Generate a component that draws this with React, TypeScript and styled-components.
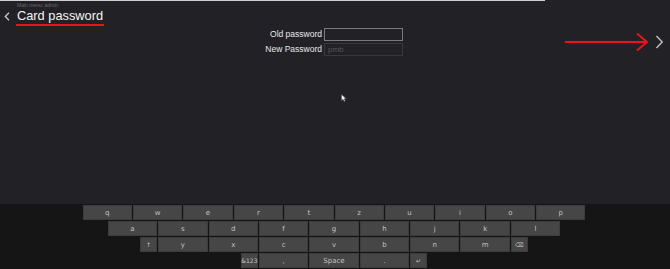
import React from "react";
import styled, { createGlobalStyle } from "styled-components";

const GlobalStyle = createGlobalStyle`
  html, body {
    margin: 0;
    padding: 0;
    background: #222226;
  }
  body {
    font-family: "Liberation Sans", Arial, sans-serif;
  }
`;

type KeyDef = { label: string; small?: boolean };

const rows: KeyDef[][] = [
  "qwertzuiop".split("").map(c => ({ label: c })),
  "asdfghjkl".split("").map(c => ({ label: c })),
  [
    { label: "↑", small: true },
    ..."yxcvbnm".split("").map(c => ({ label: c })),
    { label: "⌫", small: true },
  ],
  [
    { label: "&123", small: true },
    { label: "," },
    { label: "Space" },
    { label: "." },
    { label: "↵", small: true },
  ],
];

const App = () => {
  return (
    <>
      <GlobalStyle />
      <Page>
        <TopLine />
        <Header>
          <Breadcrumb>Main menu: admin</Breadcrumb>
          <TitleRow>
            <BackButton>
              <svg width="6" height="9" viewBox="0 0 6 9">
                <path d="M5 0.8 L1.3 4.5 L5 8.2" fill="none" stroke="#c8c8c8" strokeWidth="1.3" />
              </svg>
            </BackButton>
            <Title>Card password</Title>
          </TitleRow>
        </Header>

        <Body>
          <Form>
            <Label>Old password</Label>
            <Input active />
            <Label>New Password</Label>
            <Input placeholder="pmb" />
          </Form>
        </Body>

        <Annotation>
          <svg width="86" height="20" viewBox="0 0 86 20">
            <path d="M0 10 L82 10" stroke="#e8161b" strokeWidth="2" />
            <path d="M72 1.5 L82 10 L72 18.5" fill="none" stroke="#e8161b" strokeWidth="2" />
          </svg>
        </Annotation>
        <NextButton>
          <svg width="9" height="14" viewBox="0 0 9 14">
            <path d="M1.5 1 L7.2 7 L1.5 13" fill="none" stroke="#bdbdbd" strokeWidth="1.5" />
          </svg>
        </NextButton>

        <Cursor>
          <svg width="6" height="8" viewBox="0 0 6 8">
            <path d="M0.5 0.5 L0.5 6.5 L2 5.2 L3.2 7.5 L4.2 7 L3.1 4.8 L5.2 4.8 Z" fill="#fff" stroke="#555" strokeWidth="0.6" />
          </svg>
        </Cursor>

        <Keyboard>
          {rows.map((row, i) => (
            <KeyRow key={i}>
              {row.map(k => (
                <Key key={k.label} small={k.small}>
                  {k.label}
                </Key>
              ))}
            </KeyRow>
          ))}
        </Keyboard>
      </Page>
    </>
  );
};

export default App;

const Page = styled.div`
  position: relative;
  width: 670px;
  height: 269px;
  display: flex;
  flex-direction: column;
  background: #222226;
  overflow: hidden;
`;

const TopLine = styled.div`
  width: 545px;
  height: 1px;
  background: #cfcfcf;
  flex: none;
`;

const Header = styled.div`
  display: flex;
  flex-direction: column;
  flex: none;
`;

const Breadcrumb = styled.div`
  margin: 1px 0 0 17px;
  font-size: 5px;
  line-height: 6px;
  color: #6a6a6e;
`;

const TitleRow = styled.div`
  display: flex;
  align-items: center;
  height: 17px;
`;

const BackButton = styled.div`
  width: 16px;
  display: flex;
  justify-content: center;
  padding-right: 2px;
  box-sizing: border-box;
`;

const Title = styled.h1`
  margin: 0;
  padding: 0 1px 1px;
  font-size: 12.8px;
  font-weight: 400;
  line-height: 15px;
  color: #f4f4f4;
  border-bottom: 2px solid #e8161b;
`;

const Body = styled.div`
  flex: 1;
  display: flex;
  justify-content: center;
  align-items: flex-start;
  padding-top: 3px;
`;

const Form = styled.div`
  display: grid;
  grid-template-columns: 60px 79px;
  column-gap: 2px;
  row-gap: 2px;
  margin-right: 5px;
`;

const Label = styled.div`
  font-size: 8.5px;
  line-height: 13px;
  color: #e6e6e6;
  text-align: right;
  white-space: nowrap;
`;

const Input = styled.input<{ active?: boolean }>`
  box-sizing: border-box;
  width: 79px;
  height: 13px;
  margin: 0;
  padding: 0 3px;
  background: #222226;
  border: 1px solid ${p => (p.active ? "#7a7a7e" : "#38383c")};
  font-family: "Liberation Sans", Arial, sans-serif;
  font-size: 8px;
  color: #ddd;
  outline: none;

  &::placeholder {
    color: #56565a;
  }
`;

const Annotation = styled.div`
  position: absolute;
  left: 565px;
  top: 32px;
  line-height: 0;
`;

const NextButton = styled.div`
  position: absolute;
  left: 655px;
  top: 35px;
  line-height: 0;
`;

const Cursor = styled.div`
  position: absolute;
  left: 341px;
  top: 94px;
  line-height: 0;
`;

const Keyboard = styled.div`
  flex: none;
  height: 65px;
  box-sizing: border-box;
  padding-top: 1px;
  background: #151515;
  display: flex;
  flex-direction: column;
  gap: 1px;
`;

const KeyRow = styled.div`
  display: flex;
  justify-content: center;
  gap: 1px;
  padding-right: 2px;
`;

const Key = styled.div<{ small?: boolean }>`
  box-sizing: border-box;
  width: ${p => (p.small ? "17px" : "49.4px")};
  height: 15px;
  background: #464646;
  border: 1px solid #3c3c3c;
  display: flex;
  align-items: center;
  justify-content: center;
  font-family: "DejaVu Sans", "Liberation Sans", sans-serif;
  font-size: ${p => (p.small ? "6px" : "7px")};
  color: #c2c2c2;
`;
